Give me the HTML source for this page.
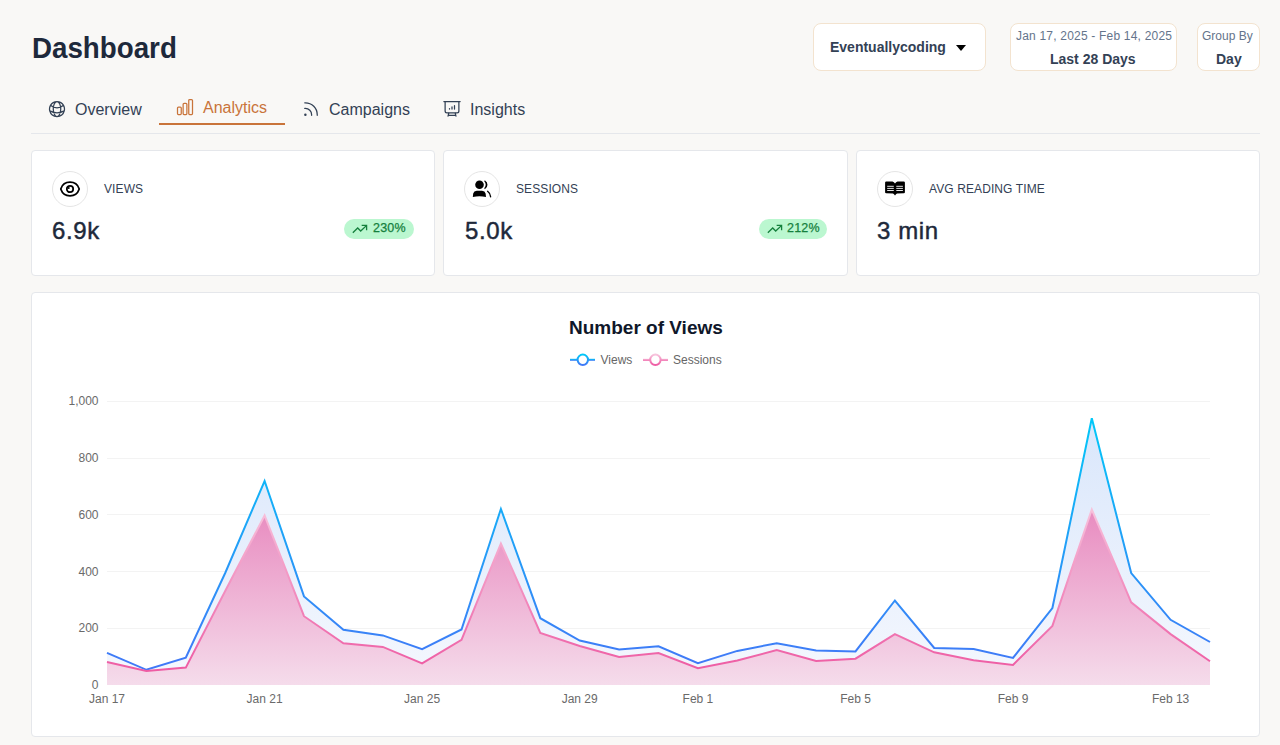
<!DOCTYPE html>
<html><head><meta charset="utf-8">
<style>
*{box-sizing:border-box;margin:0;padding:0}
html,body{width:1280px;height:745px;overflow:hidden;background:#f9f8f6;font-family:"Liberation Sans",sans-serif;color:#1e293b}
.a{position:absolute;white-space:nowrap;line-height:1}
.box{position:absolute;background:#fff;border:1px solid #f3e3cf;border-radius:8px}
.card{position:absolute;background:#fff;border:1px solid #e5e7eb;border-radius:4px}
.circ{position:absolute;width:36px;height:36px;border:1px solid #e5e5e5;border-radius:50%}
.lbl{font-size:12px;letter-spacing:0.1px;color:#334155}
.val{font-size:24px;letter-spacing:0.6px;color:#1e293b;-webkit-text-stroke:0.45px #1e293b}
.badge{position:absolute;height:20px;border-radius:10px;background:#bbf7d0;color:#15803d}
.tab{font-size:16px;color:#334155}
</style></head><body>

<div class="a" style="left:32px;top:33px;font-size:29.5px;font-weight:700;color:#1e293b;transform:scaleX(0.94);transform-origin:0 0">Dashboard</div>

<!-- top controls -->
<div class="box" style="left:813px;top:23px;width:173px;height:48px"></div>
<div class="a" style="left:830px;top:40px;font-size:14px;font-weight:700;color:#334155">Eventuallycoding</div>
<svg class="a" style="left:955px;top:44px" width="12" height="8" viewBox="0 0 12 8"><path d="M1 1h10L6 7z" fill="#000"/></svg>

<div class="box" style="left:1010px;top:23px;width:167px;height:48px"></div>
<div class="a" style="left:1016px;top:30px;font-size:12px;letter-spacing:0.2px;color:#64748b">Jan 17, 2025 - Feb 14, 2025</div>
<div class="a" style="left:1050px;top:52px;font-size:14px;font-weight:700;color:#334155">Last 28 Days</div>

<div class="box" style="left:1197px;top:23px;width:63px;height:48px"></div>
<div class="a" style="left:1202px;top:30px;font-size:12px;color:#64748b">Group By</div>
<div class="a" style="left:1216px;top:52px;font-size:14px;font-weight:700;color:#334155">Day</div>

<!-- tabs -->
<svg class="a" style="left:47px;top:99px" width="20" height="20" viewBox="0 0 24 24" fill="none" stroke="#334155" stroke-width="1.5" stroke-linecap="round" stroke-linejoin="round"><path d="M12 21a9.004 9.004 0 0 0 8.716-6.747M12 21a9.004 9.004 0 0 1-8.716-6.747M12 21c2.485 0 4.5-4.03 4.5-9S14.485 3 12 3m0 18c-2.485 0-4.5-4.03-4.5-9S9.515 3 12 3m0 0a8.997 8.997 0 0 1 7.843 4.582M12 3a8.997 8.997 0 0 0-7.843 4.582m15.686 0A11.953 11.953 0 0 1 12 10.5c-2.998 0-5.74-1.1-7.843-2.918m15.686 0A8.959 8.959 0 0 1 21 12c0 .778-.099 1.533-.284 2.253m0 0A17.919 17.919 0 0 1 12 16.5c-3.162 0-6.133-.815-8.716-2.247m0 0A9.015 9.015 0 0 1 3 12c0-1.605.42-3.113 1.157-4.418"/></svg>
<div class="a tab" style="left:75px;top:102px">Overview</div>

<svg class="a" style="left:175px;top:97px" width="20" height="20" viewBox="0 0 24 24" fill="none" stroke="#c9743a" stroke-width="1.5"><path d="M3 13.125C3 12.504 3.504 12 4.125 12h2.25c.621 0 1.125.504 1.125 1.125v6.75C7.5 20.496 6.996 21 6.375 21h-2.25A1.125 1.125 0 0 1 3 19.875v-6.75ZM9.75 8.625c0-.621.504-1.125 1.125-1.125h2.25c.621 0 1.125.504 1.125 1.125v11.25c0 .621-.504 1.125-1.125 1.125h-2.25a1.125 1.125 0 0 1-1.125-1.125V8.625ZM16.5 4.125c0-.621.504-1.125 1.125-1.125h2.25C20.496 3 21 3.504 21 4.125v15.75c0 .621-.504 1.125-1.125 1.125h-2.25a1.125 1.125 0 0 1-1.125-1.125V4.125Z"/></svg>
<div class="a tab" style="left:203px;top:100px;color:#c9743a">Analytics</div>
<div class="a" style="left:159px;top:123px;width:126px;height:2px;background:#c9743a"></div>

<svg class="a" style="left:301px;top:99px" width="20" height="20" viewBox="0 0 24 24" fill="none" stroke="#334155" stroke-width="1.5" stroke-linecap="round" stroke-linejoin="round"><path d="M12.75 19.5v-.75a7.5 7.5 0 0 0-7.5-7.5H4.5m0-6.75h.75c7.87 0 14.25 6.38 14.25 14.25v.75M6 18.75a.75.75 0 1 1-1.5 0 .75.75 0 0 1 1.5 0Z"/></svg>
<div class="a tab" style="left:329px;top:102px">Campaigns</div>

<svg class="a" style="left:442px;top:99px" width="20" height="20" viewBox="0 0 24 24" fill="none" stroke="#334155" stroke-width="1.5" stroke-linecap="round" stroke-linejoin="round"><path d="M3.75 3v11.25A2.25 2.25 0 0 0 6 16.5h12a2.25 2.25 0 0 0 2.25-2.25V3M2.25 3h19.5M8.25 16.5l-1 4M15.75 16.5l1 4M7.5 19.5h9M9 12v-.5M12 12V9.5M15 12V8"/></svg>
<div class="a tab" style="left:470px;top:102px">Insights</div>

<div class="a" style="left:31px;top:133px;width:1229px;height:1px;background:#e5e7eb"></div>

<!-- stat cards -->
<div class="card" style="left:31px;top:150px;width:404px;height:126px"></div>
<div class="card" style="left:443px;top:150px;width:405px;height:126px"></div>
<div class="card" style="left:856px;top:150px;width:404px;height:126px"></div>

<div class="circ" style="left:52px;top:171px"></div>
<div class="circ" style="left:464px;top:171px"></div>
<div class="circ" style="left:877px;top:171px"></div>

<div class="a lbl" style="left:104px;top:183px">VIEWS</div>
<div class="a lbl" style="left:516px;top:183px">SESSIONS</div>
<div class="a lbl" style="left:929px;top:183px">AVG READING TIME</div>

<div class="a val" style="left:52px;top:219px">6.9k</div>
<div class="a val" style="left:465px;top:219px">5.0k</div>
<div class="a val" style="left:877px;top:219px">3 min</div>

<div class="badge" style="left:344px;top:219px;width:70px"></div>
<div class="a" style="left:373px;top:222px;font-size:12.5px;letter-spacing:0.2px;color:#15803d;-webkit-text-stroke:0.25px #15803d">230%</div>
<div class="badge" style="left:759px;top:219px;width:68px"></div>
<div class="a" style="left:787px;top:222px;font-size:12.5px;letter-spacing:0.2px;color:#15803d;-webkit-text-stroke:0.25px #15803d">212%</div>

<!-- chart card -->
<div class="card" style="left:31px;top:292px;width:1229px;height:445px"></div>
<div class="a" style="left:569px;top:318px;font-size:19px;font-weight:700;color:#0f172a">Number of Views</div>


<!-- card icons -->
<svg class="a" style="left:59px;top:178px" width="22" height="22" viewBox="0 0 24 24" fill="none" stroke="#000" stroke-width="1.9" stroke-linecap="round" stroke-linejoin="round"><path d="M2.036 12.322a1.012 1.012 0 0 1 0-.639C3.423 7.51 7.36 4.5 12 4.5c4.638 0 8.573 3.007 9.963 7.178.07.207.07.431 0 .639C20.577 16.49 16.64 19.5 12 19.5c-4.638 0-8.573-3.007-9.963-7.178Z"/><circle cx="12" cy="12" r="3.5"/><circle cx="10.6" cy="10.8" r="1.1" fill="#000" stroke="none"/></svg>
<svg class="a" style="left:0;top:0" width="1280" height="300" viewBox="0 0 1280 300">
<circle cx="479.5" cy="184.7" r="4.3" fill="#000"/>
<path d="M484.6 180.9 A4.4 4.4 0 0 1 484.6 188.6 A5.2 5.2 0 0 0 484.6 180.9Z" fill="#000" stroke="#000" stroke-width="1.2"/>
<path d="M472.8 196.9 L473.2 193.6 Q473.8 191 476.8 190.8 L482 190.8 Q485 191 485.6 193.6 L486 196.9 Q479.4 195.6 472.8 196.9Z" fill="#000"/>
<path d="M487.6 191.3 C489.4 192.6 490.4 194.6 490.6 196.7" fill="none" stroke="#000" stroke-width="1.4" stroke-linecap="round"/>
<path d="M885.1 182.6 Q885.1 181.4 886.3 181.4 L892.5 181.4 Q894 181.6 895 183.6 Q896 181.6 897.5 181.4 L903.7 181.4 Q904.9 181.4 904.9 182.6 L904.9 192.2 Q904.9 193.2 903.9 193.2 L897 193.4 Q896 194 895 195.6 Q894 194 893 193.4 L886.1 193.2 Q885.1 193.2 885.1 192.2Z" fill="#000"/>
<path d="M887.2 186.3h6.6M887.2 188.4h6.6M887.2 190.5h6.6M896.3 186.3h6.6M896.3 188.4h6.6M896.3 190.5h6.6" stroke="#fff" stroke-width="0.9"/>
<path d="M353.3 232.3 L357.7 228 L360.7 231 L366.4 225.6 M362.3 225.4 H366.6 V229.7" fill="none" stroke="#15803d" stroke-width="1.3" stroke-linecap="square" stroke-linejoin="miter"/>
<path d="M768.3 232.3 L772.7 228 L775.7 231 L781.4 225.6 M777.3 225.4 H781.6 V229.7" fill="none" stroke="#15803d" stroke-width="1.3" stroke-linecap="square" stroke-linejoin="miter"/>
</svg>
<svg class="a" style="left:0;top:0" width="1280" height="745" viewBox="0 0 1280 745">
<defs>
<linearGradient id="vl" gradientUnits="userSpaceOnUse" x1="0" y1="418" x2="0" y2="670"><stop offset="0" stop-color="#00c8f8"/><stop offset="1" stop-color="#4277f7"/></linearGradient>
<linearGradient id="sl" gradientUnits="userSpaceOnUse" x1="0" y1="507" x2="0" y2="671"><stop offset="0" stop-color="#f7c3dc"/><stop offset="1" stop-color="#ee5ba3"/></linearGradient>
<linearGradient id="va" gradientUnits="userSpaceOnUse" x1="0" y1="418" x2="0" y2="685"><stop offset="0" stop-color="#d9e6fb"/><stop offset="1" stop-color="#f5f8fe"/></linearGradient>
<linearGradient id="sa" gradientUnits="userSpaceOnUse" x1="0" y1="507" x2="0" y2="685"><stop offset="0" stop-color="#e88abf"/><stop offset="1" stop-color="#f5dceb"/></linearGradient>
<linearGradient id="lgv" x1="0" y1="0" x2="0" y2="1"><stop offset="0" stop-color="#00c8f8"/><stop offset="1" stop-color="#4277f7"/></linearGradient>
<linearGradient id="lgs" x1="0" y1="0" x2="0" y2="1"><stop offset="0" stop-color="#f7c3dc"/><stop offset="1" stop-color="#ee5ba3"/></linearGradient>
</defs>
<rect x="107" y="401" width="1103" height="1" fill="#f3f3f3"/>
<rect x="107" y="458" width="1103" height="1" fill="#f3f3f3"/>
<rect x="107" y="514" width="1103" height="1" fill="#f3f3f3"/>
<rect x="107" y="571" width="1103" height="1" fill="#f3f3f3"/>
<rect x="107" y="628" width="1103" height="1" fill="#f3f3f3"/>
<polygon points="107,685 107.0,652.8 146.4,669.8 185.8,657.7 225.2,573.0 264.6,481.0 304.0,596.4 343.4,629.8 382.8,635.4 422.1,649.1 461.5,629.5 500.9,509.0 540.3,618.2 579.7,640.6 619.1,649.4 658.5,646.3 697.9,663.2 737.3,650.9 776.7,643.2 816.1,650.6 855.5,651.4 894.9,600.5 934.2,648.0 973.6,649.0 1013.0,657.9 1052.4,608.0 1091.8,418.3 1131.2,573.1 1170.6,619.8 1210.0,642.0 1210,685" fill="url(#va)"/>
<polygon points="107,685 107.0,662.1 146.4,670.9 185.8,667.6 225.2,591.0 264.6,515.5 304.0,616.2 343.4,643.2 382.8,646.9 422.1,663.4 461.5,639.8 500.9,543.5 540.3,632.9 579.7,646.0 619.1,656.9 658.5,653.1 697.9,668.2 737.3,660.5 776.7,650.1 816.1,660.9 855.5,658.7 894.9,634.2 934.2,652.3 973.6,660.2 1013.0,664.9 1052.4,625.9 1091.8,509.5 1131.2,602.4 1170.6,634.1 1210.0,661.2 1210,685" fill="url(#sa)"/>
<polyline points="107.0,652.8 146.4,669.8 185.8,657.7 225.2,573.0 264.6,481.0 304.0,596.4 343.4,629.8 382.8,635.4 422.1,649.1 461.5,629.5 500.9,509.0 540.3,618.2 579.7,640.6 619.1,649.4 658.5,646.3 697.9,663.2 737.3,650.9 776.7,643.2 816.1,650.6 855.5,651.4 894.9,600.5 934.2,648.0 973.6,649.0 1013.0,657.9 1052.4,608.0 1091.8,418.3 1131.2,573.1 1170.6,619.8 1210.0,642.0" fill="none" stroke="url(#vl)" stroke-width="2" stroke-linejoin="miter"/>
<polyline points="107.0,662.1 146.4,670.9 185.8,667.6 225.2,591.0 264.6,515.5 304.0,616.2 343.4,643.2 382.8,646.9 422.1,663.4 461.5,639.8 500.9,543.5 540.3,632.9 579.7,646.0 619.1,656.9 658.5,653.1 697.9,668.2 737.3,660.5 776.7,650.1 816.1,660.9 855.5,658.7 894.9,634.2 934.2,652.3 973.6,660.2 1013.0,664.9 1052.4,625.9 1091.8,509.5 1131.2,602.4 1170.6,634.1 1210.0,661.2" fill="none" stroke="url(#sl)" stroke-width="2" stroke-linejoin="miter"/>
<text x="98.5" y="405.2" text-anchor="end" font-size="12" fill="#6a6a6a">1,000</text>
<text x="98.5" y="462.0" text-anchor="end" font-size="12" fill="#6a6a6a">800</text>
<text x="98.5" y="518.8" text-anchor="end" font-size="12" fill="#6a6a6a">600</text>
<text x="98.5" y="575.6" text-anchor="end" font-size="12" fill="#6a6a6a">400</text>
<text x="98.5" y="632.4" text-anchor="end" font-size="12" fill="#6a6a6a">200</text>
<text x="98.5" y="689.2" text-anchor="end" font-size="12" fill="#6a6a6a">0</text>
<text x="107.0" y="703" text-anchor="middle" font-size="12" fill="#6a6a6a">Jan 17</text>
<text x="264.6" y="703" text-anchor="middle" font-size="12" fill="#6a6a6a">Jan 21</text>
<text x="422.1" y="703" text-anchor="middle" font-size="12" fill="#6a6a6a">Jan 25</text>
<text x="579.7" y="703" text-anchor="middle" font-size="12" fill="#6a6a6a">Jan 29</text>
<text x="697.9" y="703" text-anchor="middle" font-size="12" fill="#6a6a6a">Feb 1</text>
<text x="855.5" y="703" text-anchor="middle" font-size="12" fill="#6a6a6a">Feb 5</text>
<text x="1013.0" y="703" text-anchor="middle" font-size="12" fill="#6a6a6a">Feb 9</text>
<text x="1170.6" y="703" text-anchor="middle" font-size="12" fill="#6a6a6a">Feb 13</text>
<rect x="570" y="358.8" width="25" height="2" fill="url(#lgv)"/>
<circle cx="582.8" cy="359.8" r="5.2" fill="#fff" stroke="url(#lgv)" stroke-width="2"/>
<text x="600.5" y="364" font-size="12" fill="#666">Views</text>
<rect x="643" y="358.8" width="25" height="2" fill="url(#lgs)"/>
<circle cx="655.4" cy="359.8" r="5.2" fill="#fff" stroke="url(#lgs)" stroke-width="2"/>
<text x="673" y="364" font-size="12" fill="#666">Sessions</text>
</svg>
</body></html>
